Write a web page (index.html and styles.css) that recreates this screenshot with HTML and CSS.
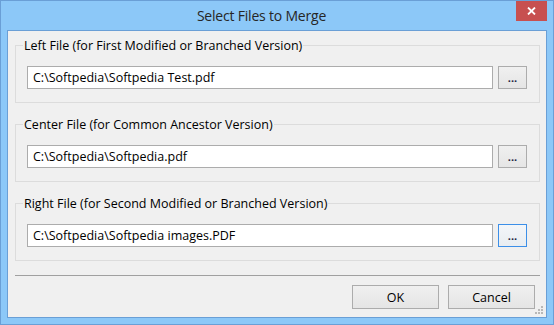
FILE: index.html
```html
<!DOCTYPE html>
<html>
<head>
<meta charset="utf-8">
<link rel="stylesheet" href="styles.css">
</head>
<body>
<div class="window">
  <div class="titlebar">
    <div class="title">Select Files to Merge</div>
    <div class="close"><svg width="9" height="8" viewBox="0 0 9 8"><path d="M1 0.5 L8 7.5 M8 0.5 L1 7.5" stroke="#fff" stroke-width="1.8"/></svg></div>
  </div>
  <div class="client">
    <fieldset class="group">
      <legend>Left File (for First Modified or Branched Version)</legend>
      <div class="row"><div class="field">C:\Softpedia\Softpedia Test.pdf</div><button class="browse">...</button></div>
    </fieldset>
    <fieldset class="group">
      <legend>Center File (for Common Ancestor Version)</legend>
      <div class="row"><div class="field">C:\Softpedia\Softpedia.pdf</div><button class="browse">...</button></div>
    </fieldset>
    <fieldset class="group">
      <legend>Right File (for Second Modified or Branched Version)</legend>
      <div class="row"><div class="field">C:\Softpedia\Softpedia images.PDF</div><button class="browse focused">...</button></div>
    </fieldset>
    <div class="separator"></div>
    <div class="actions">
      <button class="btn">OK</button>
      <button class="btn">Cancel</button>
    </div>
    <svg class="grip" width="9" height="9" viewBox="0 0 9 9"><g fill="#b8b8b8"><rect x="6" y="0" width="2" height="2"/><rect x="3" y="3" width="2" height="2"/><rect x="6" y="3" width="2" height="2"/><rect x="0" y="6" width="2" height="2"/><rect x="3" y="6" width="2" height="2"/><rect x="6" y="6" width="2" height="2"/></g></svg>
  </div>
</div>
</body>
</html>
```
FILE: styles.css
```css
* { box-sizing: border-box; }
html, body { margin: 0; padding: 0; }
body { width: 554px; height: 325px; overflow: hidden; font-family: "Open Sans", "Noto Sans", sans-serif; }
.window {
  width: 554px; height: 325px;
  background: #8cc8f8;
  border: 1px solid #6a9fd6;
  display: flex; flex-direction: column;
  padding: 0 6px 6px 6px;
}
.titlebar { height: 29px; display: flex; align-items: flex-start; }
.title {
  flex: 1; text-align: center;
  font-size: 14px; letter-spacing: -0.2px; color: #262626;
  line-height: 30px; padding-left: 0;
}
.close {
  width: 31px; height: 20px; background: #c75050;
  display: flex; align-items: center; justify-content: center;
}
.client {
  position: relative;
  flex: 1;
  background: #f0f0f0;
  border: 1px solid #6a9fd6;
  padding: 7px 6px 8px 7px;
  display: flex; flex-direction: column;
  font-size: 12.5px; color: #000;
}
.group {
  margin: 0 0 14px 0;
  border: 1px solid #dcdcdc;
  padding: 13px 12px 13px 11px;
  min-width: 0;
}
.group legend {
  padding: 0 1px; margin-left: -4px;
  line-height: 15px; font-size: 12.5px;
}
.row { display: flex; gap: 5px; }
.field {
  flex: 1; height: 23px;
  background: #fff; border: 1px solid #acacac;
  padding: 0 5px; line-height: 21px; font-size: 12.5px;
  white-space: nowrap;
}
.browse {
  width: 29px; height: 23px;
  border: 1px solid #acacac;
  background: linear-gradient(#f0f0f0, #e5e5e5);
  font-family: inherit; font-size: 11px; font-weight: 700; padding: 0; line-height: 17px;
  color: #202040;
}
.browse.focused { border-color: #3c8fe8; background: linear-gradient(#f3f6f9, #e9edf1); }
.separator { height: 1px; background: #a0a0a0; margin: 0 0 9px 0; }
.actions { display: flex; justify-content: flex-end; gap: 9px; padding-right: 5px; }
.btn {
  width: 87px; height: 24px;
  border: 1px solid #acacac;
  background: linear-gradient(#f0f0f0, #e5e5e5);
  font-family: inherit; font-size: 12.5px; color: #000; padding: 0;
}
.grip { position: absolute; right: 2px; bottom: 2px; }
```
